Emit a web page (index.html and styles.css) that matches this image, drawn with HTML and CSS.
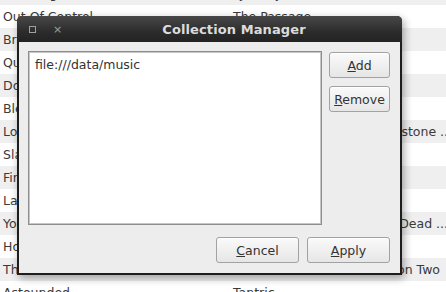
FILE: index.html
```html
<!DOCTYPE html>
<html>
<head>
  <meta charset="UTF-8">
  <title>Collection Manager</title>
  <link rel="stylesheet" href="styles.css">
</head>
<body>
  <!-- 背景の曲リスト -->
  <div class="tracks">
    <div class="row"><span class="c1">Crawling Back to Me</span><span class="c2">Tyranny</span><span class="c3"></span></div>
    <div class="row"><span class="c1">Out Of Control</span><span class="c2">The Passage</span><span class="c3"></span></div>
    <div class="row"><span class="c1">Breakdown</span><span class="c2">Tantric</span><span class="c3"></span></div>
    <div class="row"><span class="c1">Quicksand</span><span class="c2">Tantric</span><span class="c3"></span></div>
    <div class="row"><span class="c1">Down and Out</span><span class="c2">Tantric</span><span class="c3"></span></div>
    <div class="row"><span class="c1">Bleed</span><span class="c2">Tantric</span><span class="c3"></span></div>
    <div class="row"><span class="c1">Lonely Days</span><span class="c2">Tantric</span><span class="c3 clip">Cornerstone ...</span></div>
    <div class="row"><span class="c1">Slave</span><span class="c2">Tantric</span><span class="c3"></span></div>
    <div class="row"><span class="c1">Fire</span><span class="c2">Tantric</span><span class="c3"></span></div>
    <div class="row"><span class="c1">Last Time</span><span class="c2">Tantric</span><span class="c3"></span></div>
    <div class="row"><span class="c1">You Are</span><span class="c2">Tantric</span><span class="c3 dead">Dead ...</span></div>
    <div class="row"><span class="c1">Hole</span><span class="c2">Tantric</span><span class="c3"></span></div>
    <div class="row"><span class="c1">The Chain</span><span class="c2">Tantric</span><span class="c3 two">Season Two</span></div>
    <div class="row"><span class="c1">Astounded</span><span class="c2">Tantric</span><span class="c3"></span></div>
  </div>

  <!-- ダイアログ -->
  <div class="window">
    <div class="titlebar">
      <div class="wm-buttons">
        <span class="wm-max"></span>
        <span class="wm-close">&#215;</span>
      </div>
      <div class="title">Collection Manager</div>
    </div>
    <div class="content">
      <div class="pathlist">
        <div class="path">file:///data/music</div>
      </div>
      <div class="side">
        <button class="btn"><u>A</u>dd</button>
        <button class="btn"><u>R</u>emove</button>
      </div>
      <div class="footer">
        <button class="btn wide"><u>C</u>ancel</button>
        <button class="btn wide"><u>A</u>pply</button>
      </div>
    </div>
  </div>
</body>
</html>
```

FILE: styles.css
```css
body {
  margin: 0;
  font-family: "DejaVu Sans", sans-serif;
  font-size: 12.5px;
  color: #3a3a3a;
  background: #fff;
  overflow: hidden;
}

/* 背景リスト */
.tracks {
  margin-top: -18px;
}

.row {
  display: grid;
  grid-template-columns: 233px 1fr auto;
  height: 23px;
  line-height: 23px;
  white-space: nowrap;
  overflow: hidden;
}

.row:nth-child(odd) {
  background: #efefef;
}

.c1 {
  padding-left: 3px;
  overflow: hidden;
}

.c3 {
  padding-right: 2px;
}

/* 右端で切れている列 */
.c3.clip {
  transform: translateX(8px);
}

.c3.dead {
  transform: translateX(4px);
}

.c3.two {
  padding-right: 6px;
}

/* ウィンドウ */
.window {
  position: absolute;
  left: 17px;
  top: 16px;
  width: 385px;
  height: 259px;
  background: #1e1e1e;
  border-radius: 5px 5px 0 0;
  box-shadow: 2px 3px 9px rgba(0, 0, 0, 0.35);
  display: flex;
  flex-direction: column;
}

.titlebar {
  height: 26px;
  display: flex;
  align-items: center;
  border-radius: 5px 5px 0 0;
  background: linear-gradient(#484848, #2c2c2c 60%, #222);
}

.wm-buttons {
  width: 49px;
  display: flex;
  align-items: center;
  padding-left: 12px;
  box-sizing: border-box;
  height: 100%;
}

.wm-max {
  width: 5px;
  height: 5px;
  border: 1px solid #a0a0a0;
}

.wm-close {
  margin-left: 17px;
  color: #a0a0a0;
  font-size: 11px;
  line-height: 1;
}

.title {
  flex: 1;
  text-align: center;
  color: #dcdcdc;
  font-weight: bold;
  font-size: 13px;
  letter-spacing: 0.1px;
}

.content {
  flex: 1;
  margin: 0 2px 2px;
  background: #ededed;
  padding: 9px 10px 10px 9px;
  display: grid;
  grid-template-columns: 1fr 61px;
  grid-template-rows: 1fr 26px;
  column-gap: 7px;
  row-gap: 12px;
}

.pathlist {
  background: #fff;
  border: 1px solid #8e8e8e;
  box-shadow: inset 0 0 0 1px #c6c6c6;
  padding: 4px 6px;
}

.path {
  color: #333;
  line-height: 17px;
}

.side {
  display: flex;
  flex-direction: column;
  gap: 8px;
  padding-top: 1px;
}

.footer {
  grid-column: 1 / 3;
  display: flex;
  justify-content: flex-end;
  gap: 8px;
}

.btn {
  height: 26px;
  padding: 0;
  font-family: "DejaVu Sans", sans-serif;
  font-size: 12.5px;
  color: #333;
  border: 1px solid #a2a2a2;
  border-radius: 3px;
  background: linear-gradient(#fafafa, #e6e6e6);
  box-shadow: inset 0 1px 0 #fff;
}

.wide {
  width: 83px;
}
```
